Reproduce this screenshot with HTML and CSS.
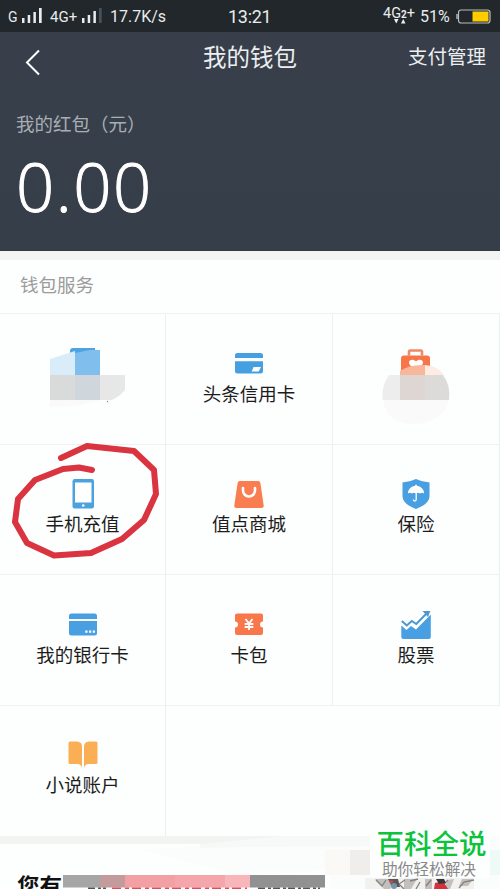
FILE: index.html
```html
<!DOCTYPE html>
<html lang="zh-CN">
<head>
<meta charset="utf-8">
<title>我的钱包</title>
<link rel="stylesheet" href="styles.css">
</head>
<body>
<div class="screen">
  <div class="status">
    <span class="sim">G</span>
    <svg class="bars1" width="20" height="15" viewBox="0 0 20 15" fill="#e8ecee"><path d="M0 10h2.5v5H0zM5.700 7h2.500v8h-2.500zM11.400 4h2.500v11h-2.500zM17 0h2.700v15H17z"/></svg>
    <span class="net">4G+</span>
    <svg class="bars2" width="20" height="15" viewBox="0 0 20 15" fill="#e8ecee"><path d="M0 10h2.500v5H0zM5.700 7h2.500v8h-2.500zM11.400 3h2.500v12h-2.500z"/><path fill="#485158" d="M17 0h2.700v15H17z"/></svg>
    <span class="speed">17.7K/s</span>
    <span class="clock">13:21</span>
    <span class="data">4G<b>2</b>+<svg width="12" height="5" viewBox="0 0 12 5" fill="#eef1f2"><path d="M0 0h4.500L2.250 4.500zM7 4.500h4.500L9.250 0z"/></svg></span>
    <span class="percent">51%</span>
    <svg class="battery" width="35" height="15" viewBox="0 0 35 15"><rect x="2.500" y="1" width="31.500" height="13" rx="2.500" fill="none" stroke="#b9bec0" stroke-width="1.200"/><path d="M.3 5h1.400v5H.3z" fill="#b9bec0"/><path fill="#fc0" d="M16.500 2.500H32.500v10h-16z"/></svg>
  </div>

  <header class="hero">
    <nav class="nav">
      <svg class="back" width="16" height="27" viewBox="0 0 16 27"><path d="M14 1.500L2 13.500l12 12" fill="none" stroke="#fff" stroke-width="2"/></svg>
      <h1>我的钱包</h1>
      <span class="manage">支付管理</span>
    </nav>
    <div class="caption">我的红包（元）</div>
    <div class="amount">0.00</div>
  </header>

  <section class="services">
    <h2>钱包服务</h2>
    <div class="grid">
      <div class="cell">
        <svg class="mosaic" width="90" height="72" viewBox="0 0 90 72">
          <path d="M10 65V57h56L36 64z" fill="#fafafa"/>
          <path d="M30 15V9q0-3 3-3h22v5z" fill="#4ea3e2"/>
          <path d="M10 17l25-8v24H10z" fill="#d8edf9"/>
          <path d="M35 11l15-3h10v25H35z" fill="#80bfed"/>
          <path d="M10 33h25v25H10z" fill="#d9dbdb"/>
          <path d="M35 33h25v25H35z" fill="#cfd7dc"/>
          <path d="M60 33h25v15q-5 6-13 10H60z" fill="#e7e7e7"/>
          <circle cx="67.500" cy="59.500" r=".7" fill="#888"/>
        </svg>
      </div>
      <div class="cell">
        <svg class="icon" width="30" height="30" viewBox="0 0 30 30" fill="#469fe0"><path d="M1 9V6.500q0-2.500 2.500-2.500h23Q29 4 29 6.500V9zM1 12.300h28V22q0 2.500-2.500 2.500h-23Q1 24.500 1 22z"/><path d="M19.500 18H27l-2.300 4.500h-7z" fill="#fff"/></svg>
        <span>头条信用卡</span>
      </div>
      <div class="cell">
        <svg class="mosaic case" width="90" height="82" viewBox="0 0 90 82">
          <path d="M39 13.500V9.700q0-1.200 1.200-1.200h10.600q1.200 0 1.200 1.200v3.800" fill="none" stroke="#ed8b68" stroke-width="2.600"/>
          <path d="M31 33V16.500q0-3 3-3h23q3 0 3 3V33z" fill="#f87548"/>
          <path d="M46 27c-4-2-7-4-7-6.500s4-4 7-1c3-3 7-1.500 7 1S50 25 46 27z" fill="#fff"/>
          <path d="M30 29q10-7 25-6v10H30z" fill="#f8b69b"/>
          <path d="M55 23q13 1 19 10H55z" fill="#fdebe4"/>
          <path d="M19 33h11v25H12.700Q11 44 19 33z" fill="#ededed"/>
          <path d="M30 33h25v25H30z" fill="#ded6d2"/>
          <path d="M55 33h18q8 11 6 25H55z" fill="#dcdbd9"/>
          <path d="M13 58h66Q71 82 44 82T13 58z" fill="#fafafa"/>
        </svg>
      </div>
      <div class="cell">
        <svg class="icon" width="30" height="30" viewBox="0 0 30 30"><rect x="4.500" y="0" width="21.500" height="29.500" rx="2.300" fill="#4aa3dd"/><path d="M7 3.500h16.500v20H7z" fill="#fff"/><circle cx="15.250" cy="26.500" r="1.300" fill="#fff"/></svg>
        <span>手机充值</span>
      </div>
      <div class="cell">
        <svg class="icon" width="30" height="30" viewBox="0 0 30 30"><path d="M6 2h18q2 0 2.400 2L29.700 26.500q.3 2.500-2 2.500H2.300q-2.300 0-2-2.500L3.600 4Q4 2 6 2z" fill="#f97d51"/><path d="M9 9v2.500a6 6 0 0 0 12 0V9" fill="none" stroke="#fff" stroke-width="2.600" stroke-linecap="round"/></svg>
        <span>值点商城</span>
      </div>
      <div class="cell">
        <svg class="icon" width="30" height="30" viewBox="0 0 30 30"><path d="M15 0q6 3 13.500 3.500V17c0 6-6 10-13.500 13C7.500 27 1.500 23 1.500 17V3.500Q9 3 15 0z" fill="#489fe1"/><path d="M7 14.500a8 7.500 0 0 1 7.200-7.700V5.800h1.600v1A8 7.500 0 0 1 23 14.500q-2-1.500-4 0-2-1.300-4 0-2-1.300-4 0-2-1.500-4 0z" fill="#fff"/><path d="M15.200 14v6.500q0 1.500-1.500 1.500-1.300 0-1.500-1.500" fill="none" stroke="#fff" stroke-width="1.300"/></svg>
        <span>保险</span>
      </div>
      <div class="cell">
        <svg class="icon" width="30" height="30" viewBox="0 0 30 30"><path d="M1 9V6q0-2.500 2.500-2.500h23Q29 3.500 29 6v3zM1 11h28v12q0 2.500-2.500 2.500h-23Q1 25.500 1 23z" fill="#489fe2"/><path d="M17.300 20.500h2.200v2.200h-2.200zM21 20.500h2.200v2.200H21zM24.700 20.500h2.200v2.200h-2.200z" fill="#fff"/></svg>
        <span>我的银行卡</span>
      </div>
      <div class="cell">
        <svg class="icon" width="30" height="30" viewBox="0 0 30 30"><path d="M3 3.500h24q2 0 2 2V11.500a3 3 0 0 0 0 6V23q0 2-2 2H3q-2 0-2-2v-5.500a3 3 0 0 0 0-6V5.500q0-2 2-2z" fill="#f8784c"/><path d="M11.500 9l3.500 4.500L18.500 9M10.700 14h8.600M10.700 17h8.600M15 13.500V20" fill="none" stroke="#fff" stroke-width="1.800"/></svg>
        <span>卡包</span>
      </div>
      <div class="cell">
        <svg class="icon" width="30" height="30" viewBox="0 0 30 30"><path d="M.3 15.500L5.500 20l4.500-4 5 3.500L29.800 4.500V27q0 2-2 2H2.300q-2 0-2-2z" fill="#489fe2"/><path d="M.8 11l5 4.500 5-4.500 4.500 3L26 3" fill="none" stroke="#4b98d0" stroke-width="2"/><path d="M21.500 1h7.800L27 7z" fill="#4b98d0"/></svg>
        <span>股票</span>
      </div>
      <div class="cell">
        <svg class="icon" width="30" height="30" viewBox="0 0 30 30" fill="#fbaf55"><path d="M2 1.500h7q5 .5 5 5V28q-.5-3.500-4-4H2q-1.500 0-1.500-1.500V3Q.5 1.500 2 1.500zM28 1.500h-7q-5 .5-5 5V28q.5-3.500 4-4h8q1.500 0 1.500-1.500V3q0-1.500-1.500-1.500z"/></svg>
        <span>小说账户</span>
      </div>
      <div class="cell blank"></div>
    </div>
    <svg class="scribble" width="170" height="130" viewBox="0 440 170 130"><path d="M61 458L87 446 134 451 154 470 156 494 144 520 122 539 91 553 54 555.500 27 543 15 522 18 499 35 480 63 469 79 467.500 92 470" fill="none" stroke="#d9343f" stroke-width="6" stroke-linecap="round" stroke-linejoin="round"/></svg>
  </section>

  <footer class="promo">
    <svg class="haze" width="500" height="53" viewBox="0 836 500 53">
      <path d="M140 849L260 844 375 833H500V889H330V870L240 876z" fill="#fbfcfc"/>
      <path d="M290 835.500L375 827V846L250 847 200 848V844z" fill="#f7f9f8"/>
      <path d="M350 850h20v25h-20z" fill="#f0eeeb"/>
      <path d="M325 850h25v25h-25z" fill="#fbf9f6"/>
      <path d="M490 850h10v25h-10z" fill="#eefaf6"/>
      <path d="M63 875h37v12.500H63z" fill="#a6a6a6"/>
      <path d="M100 875h25v12.500h-25z" fill="#c49b9d"/>
      <path d="M125 875h50v12.500h-50z" fill="#f2a0a4"/>
      <path d="M175 875h50v12.500h-50z" fill="#f4a6aa"/>
      <path d="M225 875h25v12.500h-25z" fill="#f8b6ba"/>
      <path d="M250 875h75v12.500h-75z" fill="#929191"/>
      <path d="M88 888.200h18M258 888.200h62" stroke="#555" stroke-width="1.500" stroke-dasharray="7 3 3 2"/>
      <path d="M112 888.200h135" stroke="#df4b57" stroke-width="1.500" stroke-dasharray="9 4 4 3"/>
      <path d="M365 878h109v11H365z" fill="#f1f1f0"/>
      <path d="M375 879h20l-5 10h-6zM404 879h13l-6 10h-7zM425 879h7v10h-7zM447 880l7-1-4 10h-5zM462 879h11l-5 7h-9z" fill="#c2bfbc"/>
      <path d="M376 880l6 6 4-6M405 880l-6 4 5 5M410 881l8-2M420 882l-4 7M431 880l-5 6M448 880l-6 6M474 880l-10 2-5 6" fill="none" stroke="#85817f" stroke-width="1.300"/>
      <path d="M388 879h10l2 8h-8z" fill="#5b5557"/>
      <path d="M435 883l8-2 5 8h-14z" fill="#d4313e"/><path d="M389 880l5 1-3 3z" fill="#c44c51"/>
      <circle cx="394" cy="886" r="3" fill="#7395ad"/><path d="M436 879h8l2 4-7 1z" fill="#393438"/>
    </svg>
    <strong>您有</strong>
    <div class="mark"><b>百科全说</b><span>助你轻松解决</span></div>
  </footer>
</div>
</body>
</html>
```

FILE: styles.css
```css
* { box-sizing: border-box; }
body { margin: 0; background: #fdfefe; font-family: "Noto Sans CJK SC", sans-serif; }
.screen { width: 500px; height: 889px; overflow: hidden; }

.status {
  display: flex; align-items: center; height: 32px; padding: 1px 7px 0 8px;
  background: #21272a; color: #e8ecee; font-family: Roboto, sans-serif; white-space: nowrap;
}
.status svg { flex: none; }
.sim { width: 14px; font-size: 14px; }
.bars1 { margin-top: -2px; }
.net { width: 32px; margin-left: 8px; font-size: 15px; }
.bars2 { margin-top: -2px; }
.speed { width: 110px; margin-left: 8px; font-size: 16px; }
.clock { width: 155px; margin-left: 8px; font-size: 18px; letter-spacing: -.3px; }
.data { position: relative; width: 37px; margin-top: -6px; font-size: 14.500px; }
.data b { font-size: 10px; }
.data svg { position: absolute; left: 11px; top: 14px; }
.percent { width: 36px; font-size: 16px; }
.battery { width: 35px; }

.hero { height: 219px; background: linear-gradient(#383f4b, #373f4a 35%, #363f49); color: #fff; border-bottom: 1px solid #2e3a3d; }
.nav { display: grid; grid-template-columns: 203px 205px 1fr; height: 62px; color: #eceef0; }
.back { margin: 17px 0 0 25px; }
.nav h1 { margin: 7px 0 0; font-size: 23.500px; line-height: 34px; font-weight: 400; }
.manage { margin-top: 7px; font-size: 19.500px; line-height: 34px; }
.caption { padding: 16px 0 0 16px; font-size: 18.500px; line-height: 26px; font-weight: 400; color: #a9aeb5; }
.amount { margin: 15px 0 0 16px; height: 70px; font: 300 67px/70px "Open Sans", sans-serif; letter-spacing: 1.500px; -webkit-text-stroke: 1px #fff; }

.services { position: relative; height: 585px; border-top: 9px solid #f2f4f3; }
.services h2 { height: 53px; margin: 0; padding-left: 20px; font-size: 18.500px; line-height: 49px; font-weight: 400; color: #9b9b9b; }
.grid {
  display: grid; grid-template-columns: 166px 167px 167px; grid-template-rows: repeat(4, 130.500px);
  border-top: 1px solid #edf2f3;
}
.cell {
  display: flex; flex-direction: column; align-items: center; padding-top: 34.500px;
  border-right: 1px solid #e9f1f4; border-bottom: 1px solid #edf2f3;
}
.cell:nth-child(n+10) { border-bottom-color: transparent; }
.blank { border-right: 0; }
.cell span { font-size: 18.500px; line-height: 26px; margin-top: 1px; color: #1c1c1c; font-weight: 400; white-space: nowrap; }
.icon { flex: none; }
.mosaic { flex: none; margin-top: -6.500px; margin-left: 5px; }
.case { margin-left: -2px; }
.scribble { position: absolute; left: 0; top: 180px; }

.promo { position: relative; height: 53px; border-top: 8px solid #f2f4f1; }
.haze { position: absolute; left: 0; top: -8px; }
.promo strong { position: relative; display: block; padding: 24px 0 0 17px; font-size: 22.500px; line-height: 34px; color: #111; width: 63px; white-space: nowrap; }
.mark { position: absolute; left: 370px; top: -20px; width: 120px; height: 54px; background: #fdfefe; text-align: center; white-space: nowrap; }
.mark b { display: block; margin-left: 3px; padding-top: 1px; font-size: 27.500px; line-height: 34px; font-weight: 500; color: #0cc33c; }
.mark span { display: block; margin: 1px -1px 0 -3px; font-size: 15.700px; line-height: 18px; font-weight: 400; color: #8a8a8a; }
```
